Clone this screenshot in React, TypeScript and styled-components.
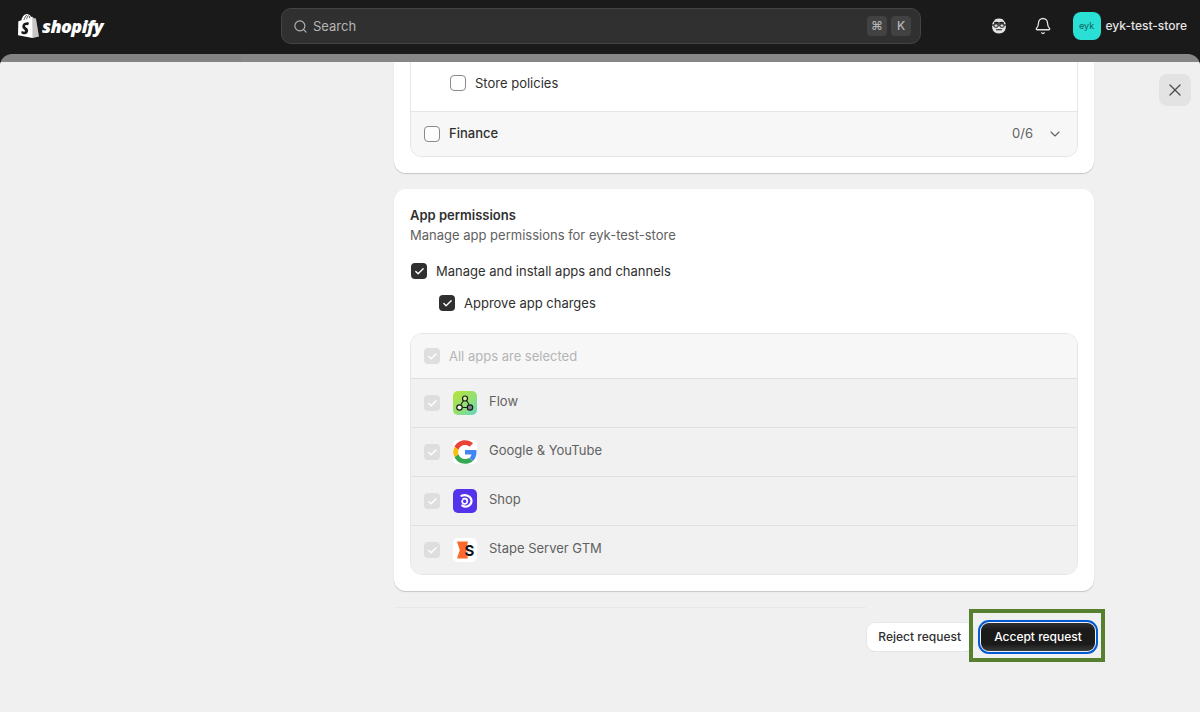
import styled, { createGlobalStyle } from "styled-components";
import { Bell, Check, ChevronDown, Search, X } from "lucide-react";

const GlobalStyle = createGlobalStyle`
  html, body {
    margin: 0;
    height: 100%;
    overflow: hidden;
    background: #1a1a1a;
    font-family: Inter, "Liberation Sans", sans-serif;
    font-size: 13px;
    line-height: 20px;
    color: #303030;
  }
  * { box-sizing: border-box; }
`;

const Shell = styled.div`
  width: 1200px;
  height: 712px;
  display: flex;
  flex-direction: column;
  background: #1a1a1a;
`;

/* top bar */
const TopBar = styled.header`
  height: 54px;
  flex: none;
  padding-bottom: 2px;
  display: grid;
  grid-template-columns: 281px 640px 1fr;
  align-items: center;
`;

const Brand = styled.div`
  display: flex;
  align-items: center;
  gap: 3px;
  padding-left: 18px;
`;

const BrandName = styled.span`
  font-family: "Open Sans", sans-serif;
  font-style: italic;
  font-weight: 800;
  font-size: 18px;
  line-height: 24px;
  letter-spacing: -0.6px;
  color: #fff;
`;

const SearchBox = styled.div`
  height: 36px;
  display: flex;
  align-items: center;
  padding: 0 9px 0 11px;
  background: #303030;
  border: 1px solid #444;
  border-radius: 10px;
  color: #b5b5b5;
  font-size: 13px;
`;

const SearchLabel = styled.span`
  flex: 1;
  margin-left: 5px;
`;

const Key = styled.kbd`
  width: 20px;
  height: 20px;
  margin-left: 4px;
  display: flex;
  align-items: center;
  justify-content: center;
  background: #424242;
  border-radius: 4px;
  font-family: Inter, sans-serif;
  font-size: 12px;
  font-weight: 500;
  color: #b5b5b5;
`;

const TopActions = styled.div`
  display: flex;
  align-items: center;
  justify-content: flex-end;
  padding-right: 13px;
`;

const IconSlot = styled.span<{ $mr: number }>`
  display: flex;
  margin-right: ${(p) => p.$mr}px;
  color: #e3e3e3;
`;

const Avatar = styled.span`
  width: 28px;
  height: 28px;
  display: flex;
  align-items: center;
  justify-content: center;
  background: #2ae0d4;
  border-radius: 8px;
  font-size: 9px;
  color: #0d5f5a;
`;

const StoreName = styled.span`
  margin-left: 5px;
  font-size: 12px;
  font-weight: 450;
  color: #e3e3e3;
`;

/* modal */
const Backdrop = styled.div`
  flex: 1;
  min-height: 0;
  padding-top: 8px;
  display: flex;
  border-radius: 12px 12px 0 0;
  overflow: hidden;
  background: linear-gradient(90deg, #838383 241px, #878787 241px);
`;

const Modal = styled.main`
  flex: 1;
  display: grid;
  grid-template-columns: 394px 700px 1fr;
  background: #f0f0f0;
`;

const Content = styled.div`
  grid-column: 2;
  display: flex;
  flex-direction: column;
  gap: 16px;
`;

const CloseColumn = styled.div`
  display: flex;
  justify-content: flex-end;
  align-items: flex-start;
  padding: 12px 9px 0 0;
`;

const CloseButton = styled.button`
  width: 32px;
  height: 32px;
  padding: 0;
  display: flex;
  align-items: center;
  justify-content: center;
  background: #e3e3e3;
  border: 0;
  border-radius: 8px;
  color: #4a4a4a;
`;

const Card = styled.section<{ $clipped?: boolean }>`
  padding: ${(p) => (p.$clipped ? "0 16px 16px" : "16px")};
  background: #fff;
  border-radius: ${(p) => (p.$clipped ? "0 0 12px 12px" : "12px")};
  box-shadow: 0 1px 0 rgba(26, 26, 26, 0.12), 0 1px 2px rgba(26, 26, 26, 0.08);
`;

const TreeBox = styled.div<{ $clipped?: boolean }>`
  border: 1px solid #e6e6e6;
  border-top-width: ${(p) => (p.$clipped ? 0 : 1)}px;
  border-radius: ${(p) => (p.$clipped ? "0 0 12px 12px" : "12px")};
  overflow: hidden;
`;

const PolicyRow = styled.div`
  height: 50px;
  padding: 0 0 8px 39px;
  display: flex;
  align-items: center;
  gap: 9px;
  border-bottom: 1px solid #e6e6e6;
`;

const FinanceRow = styled.div`
  height: 44px;
  padding: 0 14px 0 13px;
  display: flex;
  align-items: center;
  gap: 9px;
  background: #f7f7f7;
`;

const RowTitle = styled.span`
  flex: 1;
  margin-top: -2px;
  font-weight: 550;
`;

const Count = styled.span`
  margin: -2px 5px 0 0;
  color: #616161;
`;

const Box = styled.span<{ $state?: "off" | "on" | "disabled" }>`
  width: 16px;
  height: 16px;
  flex: none;
  display: flex;
  align-items: center;
  justify-content: center;
  border-radius: 4px;
  color: #fff;
  background: ${(p) =>
    p.$state === "on" ? "#303030" : p.$state === "disabled" ? "#dedede" : "#fff"};
  border: ${(p) => (p.$state === "off" || !p.$state ? "1px solid #8a8a8a" : "0")};
`;

const CardTitle = styled.h2`
  margin: 0;
  font-size: 13px;
  line-height: 20px;
  font-weight: 600;
`;

const CardText = styled.p`
  margin: 0;
  color: #616161;
`;

const Option = styled.label<{ $nested?: boolean }>`
  height: 20px;
  display: flex;
  align-items: center;
  gap: 9px;
  margin-top: ${(p) => (p.$nested ? 12 : 16)}px;
  padding-left: ${(p) => (p.$nested ? 29 : 1)}px;
`;

const AppsBox = styled(TreeBox)`
  margin-top: 20px;
`;

const AllRow = styled.div`
  height: 45px;
  padding: 0 13px;
  display: flex;
  align-items: center;
  gap: 9px;
  background: #f7f7f7;
  color: #b5b5b5;
  border-bottom: 1px solid #e0e0e0;
`;

const AppRow = styled.div`
  height: 49px;
  padding: 0 13px;
  display: flex;
  align-items: center;
  background: #f1f1f1;
  color: #616161;
  border-bottom: 1px solid #e0e0e0;
  &:last-child {
    height: 48px;
    border-bottom: 0;
  }
`;

const AppIcon = styled.span`
  display: flex;
  margin: 0 12px 0 13px;
`;

const AppName = styled.span`
  margin-top: -5px;
`;

const Footer = styled.footer`
  margin-top: 0;
`;

const FooterRule = styled.div`
  width: 472px;
  height: 1px;
  background: #e8e8e8;
`;

const FooterActions = styled.div`
  padding-top: 15px;
  display: flex;
  justify-content: flex-end;
  gap: 8px;
`;

const RejectButton = styled.button`
  height: 28px;
  padding: 0 12px 0 11px;
  background: #fff;
  border: 0;
  border-radius: 8px;
  box-shadow: 0 0 0 1px #e6e6e6, 0 1px 0 #c9c9c9;
  font: 550 12px/16px Inter, sans-serif;
  color: #303030;
`;

const AcceptButton = styled.button`
  position: relative;
  width: 114px;
  height: 28px;
  margin-right: -1px;
  padding: 0;
  background: linear-gradient(180deg, #303030 0%, #1a1a1a 25%, #1a1a1a 75%, #3a3a3a 100%);
  border: 0;
  border-radius: 8px;
  outline: 2px solid #005bd3;
  outline-offset: 1px;
  font: 550 12px/16px Inter, sans-serif;
  color: #fff;
  &::after {
    content: "";
    position: absolute;
    inset: -14px -10px -11px -12px;
    border: 4px solid #56802f;
    pointer-events: none;
  }
`;

const ShopifyBag = () => (
  <svg width="21" height="24" viewBox="0 0 21 24">
    <path
      fill="#fff"
      d="M17.9 4.6c0-.1-.1-.2-.2-.2l-1.9-.1-1.5-1.5c-.1-.1-.4-.1-.5 0l-.8.2C12.5 1.8 11.7.6 10.300.6h-.1C9.800.1 9.300 0 8.900 0 5.500 0 3.900 4.200 3.400 6.300l-2.300.7c-.7.2-.7.2-.8.900L0 21.200 14.500 24l6.500-1.400S18 4.800 17.900 4.600Z"
    />
    <path
      fill="#1a1a1a"
      d="M11 8.700 10.100 11.300s-.8-.4-1.700-.4c-1.400 0-1.500.9-1.500 1.100 0 1.200 3.200 1.700 3.200 4.600 0 2.300-1.400 3.700-3.400 3.700-2.300 0-3.500-1.400-3.500-1.400l.6-2.100s1.200 1 2.200 1c.7 0 .9-.5.900-.9 0-1.600-2.600-1.700-2.600-4.300 0-2.200 1.600-4.400 4.800-4.400 1.200 0 1.900.5 1.900.5Z"
    />
    <path fill="#1a1a1a" d="M14.500 24l6.500-1.400S18 4.800 17.900 4.600c0-.1-.1-.2-.2-.2l-1.900-.1-1.500-1.500-.1.1Z" opacity=".25" />
    <path fill="none" stroke="#1a1a1a" strokeWidth=".7" d="M6 6c.5-2 1.500-4.500 3.300-4.800M8.500 5.200c.3-1.300 1-3 2-3.500M11.700 4.300c0-.9-.1-1.800-.6-2.500" />
  </svg>
);

const NerdFace = () => (
  <svg width="16" height="16" viewBox="0 0 16 16">
    <path fill="#e3e3e3" d="M3 3.200C3.600 1.200 5.400.5 8 .5s4.400.7 5 2.700c1.300.9 1.900 2.500 1.900 4.800 0 4.600-2.300 7.500-6.900 7.500S1.100 12.600 1.100 8c0-2.300.6-3.900 1.900-4.800Z" />
    <path fill="#1a1a1a" d="M3 4.500c2-.9 3.400-.9 5 0 1.600-.9 3-.9 5 0v1.200H3Z" />
    <rect x="1" y="6.400" width="14" height="1.200" fill="#1a1a1a" />
    <rect x="3" y="6" width="4" height="3.200" rx="1" fill="#e3e3e3" stroke="#1a1a1a" />
    <rect x="9" y="6" width="4" height="3.200" rx="1" fill="#e3e3e3" stroke="#1a1a1a" />
    <path fill="none" stroke="#1a1a1a" strokeWidth="1.100" strokeLinecap="round" d="M5.500 11.800h5" />
  </svg>
);

const FlowIcon = () => (
  <svg width="24" height="24" viewBox="0 0 24 24">
    <defs>
      <linearGradient id="flowBg" x1="0" y1="0" x2="1" y2="1">
        <stop offset="0" stopColor="#b8e234" />
        <stop offset="0.6" stopColor="#8fdf7a" />
        <stop offset="1" stopColor="#5fd6c8" />
      </linearGradient>
    </defs>
    <rect width="24" height="24" rx="5" fill="url(#flowBg)" />
    <path stroke="#1a1a1a" strokeWidth="1.100" fill="none" d="M10.500 9.500 8 13.500M13.500 9.500l2.500 4M9.500 16.500h5" />
    <circle cx="12" cy="7.500" r="2.500" fill="#d9f0a0" stroke="#1a1a1a" strokeWidth="1.200" />
    <circle cx="6.500" cy="16.500" r="2.700" fill="#eef7e8" stroke="#1a1a1a" strokeWidth="1.200" />
    <circle cx="17" cy="16.500" r="2.700" fill="#7d8a84" stroke="#1a1a1a" strokeWidth="1.200" />
  </svg>
);

const GoogleIcon = () => (
  <svg width="24" height="24" viewBox="0 0 48 48">
    <rect width="48" height="48" rx="9" fill="#fff" />
    <path fill="#EA4335" d="M24 10c3.600 0 6.700 1.300 9.200 3.500l6.900-6.900C35.900 2.700 30.400.5 24 .5 14.800.5 6.900 5.800 3 13.400l8 6.200C12.900 14 18 10 24 10Z" />
    <path fill="#4285F4" d="M47 24.500c0-1.600-.1-3.200-.4-4.700H24v9h13c-.6 3-2.200 5.500-4.700 7.200l7.700 6C44.400 37.900 47 31.800 47 24.500Z" />
    <path fill="#FBBC05" d="M11 28.400c-.5-1.400-.8-2.900-.8-4.400s.3-3 .8-4.400l-8-6.200C1.400 16.600.5 20.200.500 24s.9 7.400 2.500 10.600l8-6.200Z" />
    <path fill="#34A853" d="M24 47.500c6.400 0 11.800-2.100 15.700-5.700L32 35.800c-2.100 1.400-4.900 2.300-8 2.300-6 0-11.100-4-13-9.700l-8 6.200C6.900 42.200 14.800 47.500 24 47.500Z" />
  </svg>
);

const ShopIcon = () => (
  <svg width="24" height="24" viewBox="0 0 24 24">
    <rect width="24" height="24" rx="5" fill="#5433eb" />
    <path fill="none" stroke="#fff" strokeWidth="2.200" strokeLinecap="round" d="M8.500 6.800c4.200-1.700 10 .4 10 5.200 0 4.600-5.400 7-9.300 4.500" />
    <path fill="none" stroke="#fff" strokeWidth="1.800" d="M14.300 12.300a2.600 2.600 0 1 1-5.200 0 2.600 2.600 0 0 1 5.200 0Z" />
    <path fill="#5433eb" d="M5.500 9.300h3.800v2H5.500Z" />
  </svg>
);

const StapeIcon = () => (
  <svg width="24" height="24" viewBox="0 0 24 24">
    <rect width="24" height="24" rx="5" fill="#fff" />
    <path fill="#fb6a2c" d="M4 3.500h11l-2 8.500 2 8.500H4l2.800-8.500Z" />
    <text x="11.500" y="18" fontFamily="Inter, sans-serif" fontWeight="700" fontSize="15" fill="#111">
      S
    </text>
  </svg>
);

const apps = [
  { name: "Flow", icon: <FlowIcon /> },
  { name: "Google & YouTube", icon: <GoogleIcon /> },
  { name: "Shop", icon: <ShopIcon /> },
  { name: "Stape Server GTM", icon: <StapeIcon /> },
];

const Tick = () => <Check size={11} strokeWidth={3} />;

export default function App() {
  return (
    <>
      <GlobalStyle />
      <Shell>
        <TopBar>
          <Brand>
            <ShopifyBag />
            <BrandName>shopify</BrandName>
          </Brand>
          <SearchBox>
            <Search size={15} strokeWidth={1.8} />
            <SearchLabel>Search</SearchLabel>
            <Key>⌘</Key>
            <Key>K</Key>
          </SearchBox>
          <TopActions>
            <IconSlot $mr={27}>
              <NerdFace />
            </IconSlot>
            <IconSlot $mr={21}>
              <Bell size={18} strokeWidth={1.7} />
            </IconSlot>
            <Avatar>eyk</Avatar>
            <StoreName>eyk-test-store</StoreName>
          </TopActions>
        </TopBar>
        <Backdrop>
          <Modal>
            <Content>
              <Card $clipped>
                <TreeBox $clipped>
                  <PolicyRow>
                    <Box />
                    Store policies
                  </PolicyRow>
                  <FinanceRow>
                    <Box />
                    <RowTitle>Finance</RowTitle>
                    <Count>0/6</Count>
                    <ChevronDown size={16} strokeWidth={1.6} color="#616161" />
                  </FinanceRow>
                </TreeBox>
              </Card>
              <Card>
                <CardTitle>App permissions</CardTitle>
                <CardText>Manage app permissions for eyk-test-store</CardText>
                <Option>
                  <Box $state="on">
                    <Tick />
                  </Box>
                  Manage and install apps and channels
                </Option>
                <Option $nested>
                  <Box $state="on">
                    <Tick />
                  </Box>
                  Approve app charges
                </Option>
                <AppsBox>
                  <AllRow>
                    <Box $state="disabled">
                      <Tick />
                    </Box>
                    All apps are selected
                  </AllRow>
                  {apps.map((app) => (
                    <AppRow key={app.name}>
                      <Box $state="disabled">
                        <Tick />
                      </Box>
                      <AppIcon>{app.icon}</AppIcon>
                      <AppName>{app.name}</AppName>
                    </AppRow>
                  ))}
                </AppsBox>
              </Card>
              <Footer>
                <FooterRule />
                <FooterActions>
                  <RejectButton>Reject request</RejectButton>
                  <AcceptButton>Accept request</AcceptButton>
                </FooterActions>
              </Footer>
            </Content>
            <CloseColumn>
              <CloseButton>
                <X size={20} strokeWidth={1.5} />
              </CloseButton>
            </CloseColumn>
          </Modal>
        </Backdrop>
      </Shell>
    </>
  );
}
